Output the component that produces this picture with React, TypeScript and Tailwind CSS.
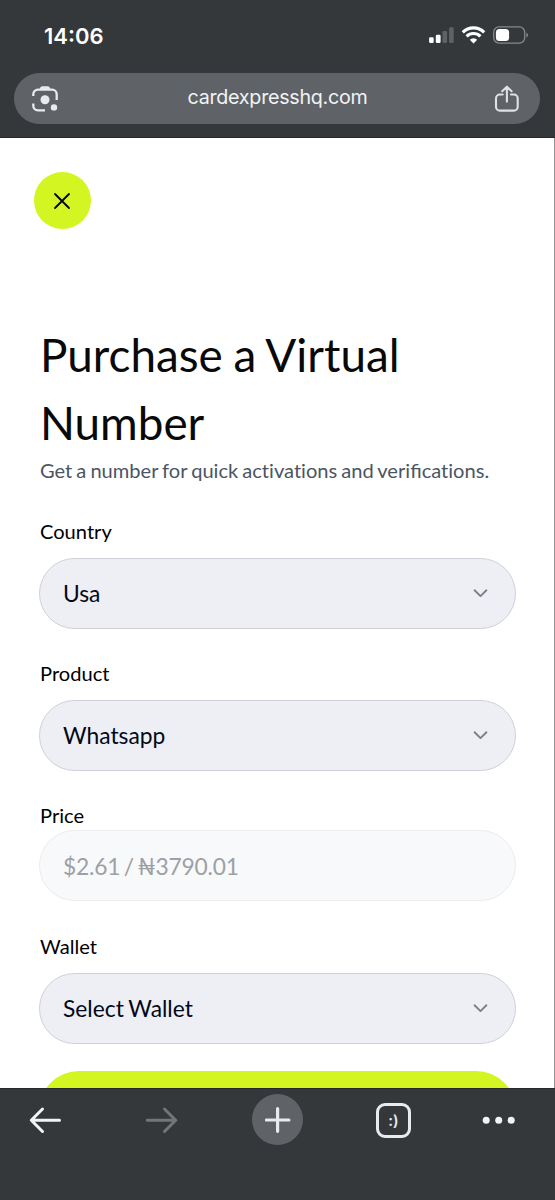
import type { ReactNode } from "react";

function StatusBar() {
  return (
    <div className="flex h-[73px] items-start pl-11 pr-[26px] pt-[22px]">
      <span className="font-['Inter',sans-serif] text-[22px] font-semibold leading-7 text-white">14:06</span>
      <svg className="ml-auto" width="100" height="28" viewBox="0 0 100 28" fill="none">
        <rect x="0.1" y="15.3" width="4.6" height="5.8" rx="1.3" fill="#fff" />
        <rect x="6.8" y="12.7" width="4.8" height="8.4" rx="1.3" fill="#fff" />
        <rect x="13.5" y="9" width="4.6" height="12.1" rx="1.3" fill="#5f6164" />
        <rect x="20.1" y="5.3" width="4.6" height="15.8" rx="1.3" fill="#5f6164" />
        <g stroke="#fff" strokeWidth="3.1">
          <path d="M33.8 10.3a15.2 15.2 0 0 1 21.4 0" />
          <path d="M37.6 14.3a9.9 9.9 0 0 1 13.8 0" />
        </g>
        <path d="M44.5 21.5l-3.7-3.8a5.3 5.3 0 0 1 7.4 0z" fill="#fff" />
        <rect x="64.7" y="4.9" width="31" height="16.2" rx="5.3" stroke="#85888b" strokeWidth="1.3" />
        <rect x="66.9" y="7" width="13.2" height="12" rx="3.5" fill="#fff" />
        <path d="M97.4 10.8c2.2 0.8 2.2 3.8 0 4.6z" fill="#85888b" />
      </svg>
    </div>
  );
}

function AddressBar() {
  return (
    <div className="ml-[14px] mr-[15px] flex h-[51px] items-center justify-between rounded-full bg-[#5f6368] pl-[17px] pr-5">
      <svg width="28" height="28" viewBox="0 0 28 28" fill="none">
        <path d="M2.3 11V9.2a4.6 4.6 0 0 1 4.6-4.6h14.2a4.6 4.6 0 0 1 4.6 4.6V15M2.3 18.5v2.3a4.6 4.6 0 0 0 4.6 4.6H14" stroke="#e8eaed" strokeWidth="2.3" />
        <path d="M8.3 4.8L9.6 2.3a2 2 0 0 1 1.7-1h5.4a2 2 0 0 1 1.7 1l1.3 2.5z" fill="#e8eaed" />
        <circle cx="14" cy="14.8" r="4.5" fill="#e8eaed" />
        <circle cx="23" cy="22.4" r="3.2" fill="#e8eaed" />
      </svg>
      <span className="-mt-0.5 pl-0.5 font-['Inter',sans-serif] text-[19.7px] tracking-[-0.27px] text-[#f1f3f4]">cardexpresshq.com</span>
      <svg width="26" height="28" viewBox="0 0 26 28" fill="none" stroke="#dfe1e3" strokeWidth="2.1" strokeLinecap="round" strokeLinejoin="round">
        <path d="M8.7 9.5H5.9A3.9 3.9 0 0 0 2 13.4v8.3a3.9 3.9 0 0 0 3.9 3.9h13.9a3.9 3.9 0 0 0 3.9-3.9v-8.3a3.9 3.9 0 0 0-3.9-3.9H17M12.9 16.6V1.8M8.2 6.2l4.7-4.5 4.7 4.5" />
      </svg>
    </div>
  );
}

function Label({ children }: { children: ReactNode }) {
  return <label className="block pl-px text-[20.1px] leading-[30px] text-black">{children}</label>;
}

function SelectField({ label, value }: { label: string; value: string }) {
  return (
    <div>
      <Label>{label}</Label>
      <button className="mt-[12px] flex h-[71px] w-full items-center justify-between rounded-full border-[1.4px] border-[#d0d1d8] bg-[#edeff4] pl-[23px] pr-[27px] text-[22.8px] text-[#020817] [word-spacing:-1px]">
        <span>{value}</span>
        <svg width="15" height="9" viewBox="0 0 15 9" fill="none" stroke="#7c7f86" strokeWidth="1.9" strokeLinecap="round" strokeLinejoin="round">
          <path d="M1.6 1.3l5.9 5.8 5.9-5.8" />
        </svg>
      </button>
    </div>
  );
}

function BottomBar() {
  return (
    <nav className="flex h-28 shrink-0 items-start border-t border-[#25292b] bg-[#35383b] pl-[29px] pt-[5px]">
      <div className="flex items-center">
        <svg width="33" height="28" viewBox="0 0 33 28" fill="none" stroke="#f1f3f4" strokeWidth="3" strokeLinecap="round" strokeLinejoin="round">
          <path d="M30.5 14.3H2.5M13.5 3L2.3 14.3l11.2 11.2" />
        </svg>
        <svg className="ml-[83px]" width="33" height="28" viewBox="0 0 33 28" fill="none" stroke="#737679" strokeWidth="3" strokeLinecap="round" strokeLinejoin="round">
          <path d="M2.3 14.3h28.5M19.5 3l11.2 11.3-11.2 11.2" />
        </svg>
        <span className="ml-[74px] flex size-[51px] items-center justify-center rounded-full bg-[#5f6368]">
          <svg width="26" height="26" viewBox="0 0 26 26" stroke="#e8eaed" strokeWidth="3.2" strokeLinecap="round">
            <path d="M12.6 1.7v22.6M1.3 13h22.6" />
          </svg>
        </span>
        <span className="ml-[73px] mt-px flex size-[35px] items-center justify-center rounded-[9px] border-[3px] border-[#e8eaed] pt-0.5 font-['Inter',sans-serif] text-[15px] font-semibold text-[#e8eaed]">
          :)
        </span>
        <svg className="ml-[71px]" width="34" height="8" viewBox="0 0 34 8" fill="#f1f3f4">
          <circle cx="4.2" cy="4.2" r="3.5" />
          <circle cx="16.7" cy="4.2" r="3.5" />
          <circle cx="29.2" cy="4.2" r="3.5" />
        </svg>
      </div>
    </nav>
  );
}

export default function App() {
  return (
    <div className="flex h-[1200px] w-[555px] flex-col overflow-hidden bg-white font-['Lato',sans-serif]">
      <header className="h-[138px] shrink-0 border-b border-[#25292b] bg-[#35383b]">
        <StatusBar />
        <AddressBar />
      </header>
      <main className="min-h-0 flex-1 overflow-hidden border-r border-[#929394] pl-[39px] pr-[38px] pt-[34px]">
        <button className="-ml-[5px] flex size-[57px] items-center justify-center rounded-full bg-[#d3f622]">
          <svg className="-ml-px" width="18" height="18" viewBox="0 0 18 18" stroke="#000" strokeWidth="1.8" strokeLinecap="round">
            <path d="M2 2l14 14M16 2L2 16" />
          </svg>
        </button>
        <h1 className="mt-[92px] pl-px text-[45.8px] leading-[68px] text-[#090909] [word-spacing:-1px]">
          Purchase a Virtual
          <br />
          Number
        </h1>
        <p className="-mt-0.5 pl-px text-[20.1px] leading-[30px] text-[#4b5563] [font-variant-ligatures:none] [word-spacing:-1.1px]">
          Get a number for quick activations and veri<span className="[font-variant-ligatures:normal]">fi</span>cations.
        </p>
        <div className="mt-[31px] flex flex-col gap-[29px]">
          <SelectField label="Country" value="Usa" />
          <SelectField label="Product" value="Whatsapp" />
          <div className="pb-px">
            <Label>Price</Label>
            <div className="flex h-[71px] items-center rounded-full border-[1.4px] border-[#ececef] bg-[#f8f9fb] pl-[23px] pt-0.5 text-[22.8px] tracking-[-0.2px] text-[#9da0a4] [word-spacing:-2.1px]">
              $2.61 / ₦3790.01
            </div>
          </div>
          <SelectField label="Wallet" value="Select Wallet" />
        </div>
        <button className="mt-[27px] h-20 w-full rounded-full bg-[#d3f622]" />
      </main>
      <BottomBar />
    </div>
  );
}
